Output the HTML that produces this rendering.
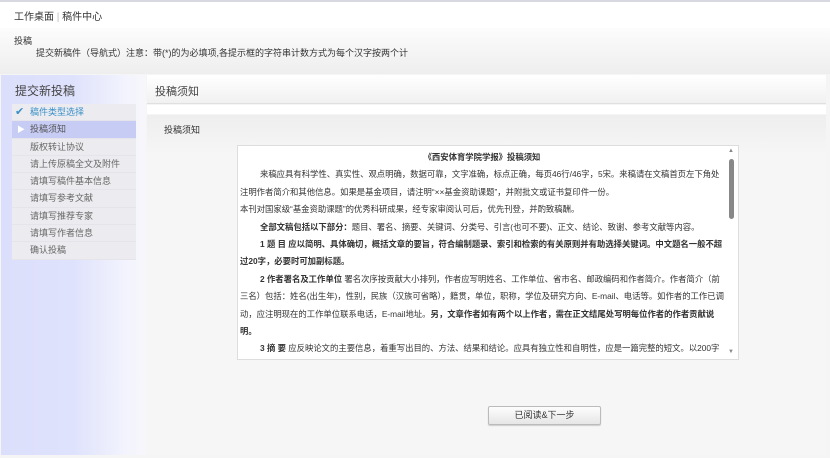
<!DOCTYPE html>
<html><head><meta charset="utf-8"><style>
*{margin:0;padding:0;box-sizing:border-box}
body{width:830px;height:458px;overflow:hidden;background:#f5f5f5;font-family:"Liberation Sans","Noto Sans CJK SC",sans-serif;color:#333;position:relative}
.a{position:absolute}
.top{left:0;top:0;width:830px;height:28px;background:#fff;border-top:2px solid #d8d8e0}
.crumb{left:14px;top:8px;font-size:10px;color:#333}
.gray{left:0;top:28px;width:830px;height:46px;background:linear-gradient(#fcfcfc,#eeeeee)}
.side{left:1px;top:75px;width:145px;height:380px;background:linear-gradient(90deg,#dcdffb 0%,#dfe2fc 50%,#f2f3fd 85%,#f7f7fb 100%)}
.menu{left:12px;top:104px;width:124px}
.menu div{height:17.3px;line-height:17px;font-size:9px;color:#666;padding-left:18px;background:#ececf0;border-bottom:1px solid #e4e4ea}
.menu div.act{background:#c7ccf5;color:#555}
.menu div.done{color:#3a8fc7}
.hd{left:147px;top:75px;width:679px;height:29px;background:linear-gradient(#fff,#f1f1f1);border-bottom:1px solid #e0e0e0;font-size:11px;padding:8px 0 0 8px;color:#444}
.strip{left:147px;top:105px;width:679px;height:9px;background:#fff}
.panel{left:147px;top:115px;width:679px;height:340px;background:linear-gradient(#eeeeee,#f6f6f6 40px,#f6f6f6)}
.box{left:237px;top:145px;width:502px;height:215px;background:#fff;border:1px solid #ddd;overflow:hidden}
.txt{padding:3px 4px 0 2px;width:490px;font-size:8.35px;line-height:17.4px;color:#333}
.txt p{margin:0}
.ind{text-indent:20px}
.sb{right:0;top:0;width:12px;height:213px;background:#fff}
.btn{left:488px;top:406px;width:113px;height:19px;border:1px solid #bbb;border-radius:2px;background:linear-gradient(#fdfdfd,#e6e6e6);font-size:9px;text-align:center;line-height:17px;color:#333;box-shadow:0 1px 1px #ccc}
</style></head><body>
<div class="a top"></div>
<div class="a crumb">工作桌面 <span style="color:#bbb">|</span> 稿件中心</div>
<div class="a gray"></div>
<div class="a" style="left:14px;top:34px;font-size:9px">投稿</div>
<div class="a" style="left:36px;top:46px;font-size:9px">提交新稿件（导航式）注意：带(*)的为必填项,各提示框的字符串计数方式为每个汉字按两个计</div>
<div class="a side"></div>
<div class="a" style="left:15px;top:82px;font-size:12px;color:#444">提交新投稿</div>
<div class="a menu">
<div class="done" style="position:relative"><span style="position:absolute;left:3px;color:#3a8fc7;font-size:11px">✔</span>稿件类型选择</div>
<div class="act" style="position:relative"><span style="position:absolute;left:5px;color:#fff;font-size:8px">▶</span>投稿须知</div>
<div>版权转让协议</div>
<div>请上传原稿全文及附件</div>
<div>请填写稿件基本信息</div>
<div>请填写参考文献</div>
<div>请填写推荐专家</div>
<div>请填写作者信息</div>
<div>确认投稿</div>
</div>
<div class="a hd">投稿须知</div>
<div class="a strip"></div>
<div class="a panel"></div>
<div class="a" style="left:164px;top:123px;font-size:9px">投稿须知</div>
<div class="a box">
<div class="txt">
<p style="text-align:center;font-weight:bold">《西安体育学院学报》投稿须知</p>
<p class="ind">来稿应具有科学性、真实性、观点明确，数据可靠，文字准确，标点正确，每页46行/46字，5宋。来稿请在文稿首页左下角处注明作者简介和其他信息。如果是基金项目，请注明“××基金资助课题”，并附批文或证书复印件一份。</p>
<p>本刊对国家级“基金资助课题”的优秀科研成果，经专家审阅认可后，优先刊登，并酌致稿酬。</p>
<p class="ind"><b>全部文稿包括以下部分：</b>题目、署名、摘要、关键词、分类号、引言(也可不要)、正文、结论、致谢、参考文献等内容。</p>
<p class="ind"><b>1 题 目 应以简明、具体确切，概括文章的要旨，符合编制题录、索引和检索的有关原则并有助选择关键词。中文题名一般不超过20字，必要时可加副标题。</b></p>
<p class="ind"><b>2 作者署名及工作单位</b> 署名次序按贡献大小排列，作者应写明姓名、工作单位、省市名、邮政编码和作者简介。作者简介（前三名）包括：姓名(出生年)，性别，民族（汉族可省略），籍贯，单位，职称，学位及研究方向、E-mail、电话等。如作者的工作已调动，应注明现在的工作单位联系电话，E-mail地址。<b>另，文章作者如有两个以上作者，需在正文结尾处写明每位作者的作者贡献说明。</b></p>
<p class="ind"><b>3 摘 要</b> 应反映论文的主要信息，着重写出目的、方法、结果和结论。应具有独立性和自明性，应是一篇完整的短文。以200字为宜。提出关键词3～8个(关键词选用能反映论文最主要内容的术语，便于作文献索引和检索而选取的词或词组)。并附英文的题目、姓名</p>
</div>
<div class="a sb">
<div class="a" style="left:2px;top:2px;font-size:6px;color:#888">▲</div>
<div class="a" style="left:3px;top:13px;width:5px;height:60px;background:#888;border-radius:3px"></div>
<div class="a" style="left:2px;top:203px;font-size:6px;color:#888">▼</div>
</div>
</div>
<div class="a btn">已阅读&amp;下一步</div>
</body></html>
